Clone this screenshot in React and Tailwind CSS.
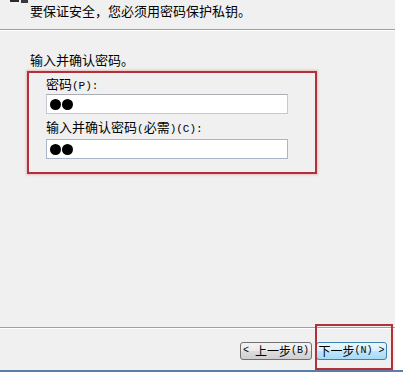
import React from "react";

const M = ({ children }) => (
  <span className="font-['Liberation_Mono',monospace] text-[11px]">{children}</span>
);

const B = ({ children }) => (
  <span className="font-['Liberation_Mono',monospace] text-[10px]">{children}</span>
);

const Dots = () => (
  <div className="flex h-full items-center pl-[3px]">
    <div className="h-[11px] w-[11px] rounded-full bg-black" />
    <div className="ml-[1px] h-[11px] w-[11px] rounded-full bg-black" />
  </div>
);

export default function App() {
  return (
    <div className="relative flex h-[372px] w-[403px] flex-col overflow-hidden bg-white font-['Noto_Sans_CJK_SC',sans-serif] text-[13px] leading-[16px] text-black">
      <div className="flex h-[370px] w-full">
        <div className="flex w-[395px] flex-col bg-[#f0f0f0]">
          {/* header */}
          <div className="flex h-[29px] flex-col">
            <div className="ml-[10px] flex h-[3px] gap-[2px]">
              <div className="h-[2px] w-[9px] bg-[#2a2a2a]" />
              <div className="h-[3px] w-[7px] bg-[#3a3a3a]" />
            </div>
            <div className="ml-[30px]">要保证安全，您必须用密码保护私钥。</div>
          </div>
          <div className="h-[1px] w-full bg-[#a0a0a0]" />
          <div className="h-[1px] w-full bg-white" />

          {/* content */}
          <div className="ml-[30px] mt-[21px]">输入并确认密码。</div>
          <div className="ml-[27px] mt-[3px] flex w-[290px] flex-col border-2 border-[#b0313a] pb-[13px] pl-[17px] pt-[3px] shadow-[0_0_2px_1px_rgba(230,150,150,0.55)]">
            <div>
              密码<M>(P):</M>
            </div>
            <div className="h-[20px] w-[242px] border border-[#c6c9cf] border-t-[#abadb3] bg-white">
              <Dots />
            </div>
            <div className="mt-[5px]">
              输入并确认密码<M>(</M>必需<M>)(C):</M>
            </div>
            <div className="mt-[2px] h-[20px] w-[242px] border border-[#a9b6c6] bg-white">
              <Dots />
            </div>
          </div>

          <div className="flex-1" />
          <div className="h-[1px] w-full bg-[#a0a0a0]" />
          <div className="h-[1px] w-full bg-white" />

          {/* buttons */}
          <div className="flex h-[41px] items-start justify-end gap-[4px] pr-[8px] pt-[13px] text-[12px]">
            <div className="flex h-[18px] w-[72px] items-center justify-center whitespace-pre rounded-[3px] border border-[#707070] bg-[linear-gradient(#f2f2f2_0%,#ebebeb_50%,#dddddd_50%,#cfcfcf_100%)] leading-[14px]">
              <B>{"< "}</B>上一步<B>(B)</B>
            </div>
            <div className="flex h-[18px] w-[71px] items-center justify-center whitespace-pre rounded-[3px] border border-[#3c7fb1] bg-[linear-gradient(#eaf6fd_0%,#d9f0fc_50%,#bee6fd_50%,#a7d9f5_100%)] leading-[14px]">
              下一步<B>{"(N) >"}</B>
            </div>
          </div>
        </div>
        <div className="flex-1 bg-white" />
      </div>
      <div className="h-[2px] w-full bg-[#5b7ea6]" />

      {/* annotation overlay */}
      <div className="pointer-events-none absolute left-[315px] top-[324px] h-[46px] w-[78px] border-2 border-[#b0313a]" />
    </div>
  );
}
